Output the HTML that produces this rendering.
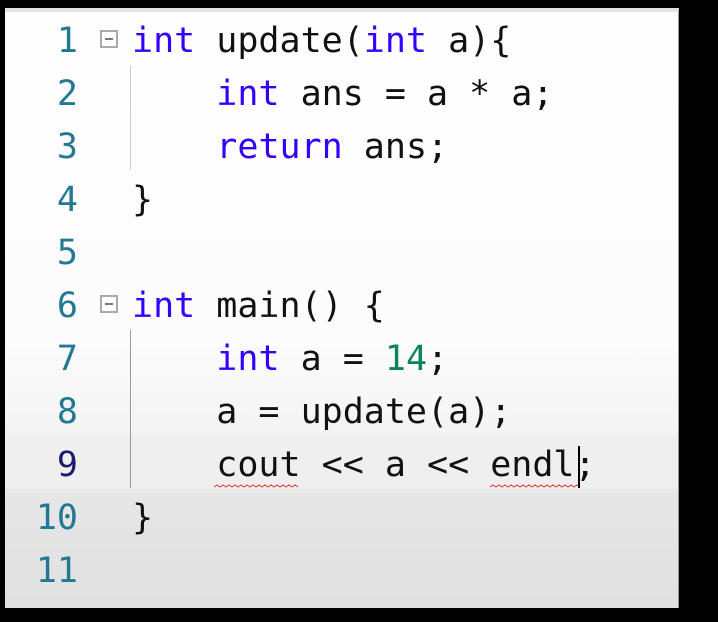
<!DOCTYPE html>
<html><head><style>
html,body{margin:0;padding:0;background:#000;width:718px;height:622px;overflow:hidden}
#p{position:absolute;left:5px;top:8px;width:674px;height:600px;background:linear-gradient(#fefefe 0%,#fcfcfc 55%,#f4f4f4 70%,#e6e6e6 82%,#e0e0e0 100%);border-right:1px solid #999;border-top:4px solid #e4e4e4;box-sizing:border-box}
.l{position:absolute;left:0;height:53px;line-height:53px;font-family:"DejaVu Sans Mono","Liberation Mono",monospace;font-size:35px;color:#111;white-space:pre}
.n{position:absolute;width:78px;text-align:right;color:#237893;left:0;font-family:"DejaVu Sans Mono",monospace;font-size:35px;line-height:53px;height:53px}
.c{position:absolute;left:132px}
.k{color:#3300ff}.g{color:#098658}
.fold{position:absolute;left:100px;width:18px;height:18px;border:2px solid #aaa;box-sizing:border-box;background:#fff}
.fold:after{content:"";position:absolute;left:3px;top:6px;width:8px;height:2px;background:#777}
.guide{position:absolute;left:130px;width:1px;background:#ccc}
.sq{position:absolute;height:4px}
</style></head><body>
<div id="p"></div>
<div style="position:absolute;left:5px;top:436px;width:673px;height:53px;background:#efefef"></div>
<div class="n" style="top:15px">1</div><div class="l" style="top:15px"><span class="c"><span class="k">int</span> update(<span class="k">int</span> a){</span></div>
<div class="n" style="top:68px">2</div><div class="l" style="top:68px"><span class="c">    <span class="k">int</span> ans = a * a;</span></div>
<div class="n" style="top:121px">3</div><div class="l" style="top:121px"><span class="c">    <span class="k">return</span> ans;</span></div>
<div class="n" style="top:174px">4</div><div class="l" style="top:174px"><span class="c">}</span></div>
<div class="n" style="top:227px">5</div>
<div class="n" style="top:280px">6</div><div class="l" style="top:280px"><span class="c"><span class="k">int</span> main() {</span></div>
<div class="n" style="top:333px">7</div><div class="l" style="top:333px"><span class="c">    <span class="k">int</span> a = <span class="g">14</span>;</span></div>
<div class="n" style="top:386px">8</div><div class="l" style="top:386px"><span class="c">    a = update(a);</span></div>
<div class="n" style="top:439px;color:#1b1b6e">9</div><div class="l" style="top:439px"><span class="c">    cout &lt;&lt; a &lt;&lt; endl;</span></div>
<div class="n" style="top:492px">10</div><div class="l" style="top:492px"><span class="c">}</span></div>
<div class="n" style="top:545px">11</div>
<div class="fold" style="top:30px"></div>
<div class="fold" style="top:295px"></div>
<div class="guide" style="top:66px;height:104px"></div>
<div class="guide" style="top:330px;height:158px;background:#999"></div>
<svg class="sq" style="left:214px;top:484px" width="86" height="5"><path d="M0 3 l3 -2 l3 2 l3 -2 l3 2 l3 -2 l3 2 l3 -2 l3 2 l3 -2 l3 2 l3 -2 l3 2 l3 -2 l3 2 l3 -2 l3 2 l3 -2 l3 2 l3 -2 l3 2 l3 -2 l3 2 l3 -2 l3 2 l3 -2 l3 2 l3 -2 l3 2" fill="none" stroke="#e33" stroke-width="1"/></svg>
<svg class="sq" style="left:490px;top:484px" width="88" height="5"><path d="M0 3 l3 -2 l3 2 l3 -2 l3 2 l3 -2 l3 2 l3 -2 l3 2 l3 -2 l3 2 l3 -2 l3 2 l3 -2 l3 2 l3 -2 l3 2 l3 -2 l3 2 l3 -2 l3 2 l3 -2 l3 2 l3 -2 l3 2 l3 -2 l3 2 l3 -2 l3 2 l3 -2 l3 2" fill="none" stroke="#e33" stroke-width="1"/></svg>
<div style="position:absolute;left:578px;top:446px;width:2px;height:42px;background:#000"></div>
</body></html>
